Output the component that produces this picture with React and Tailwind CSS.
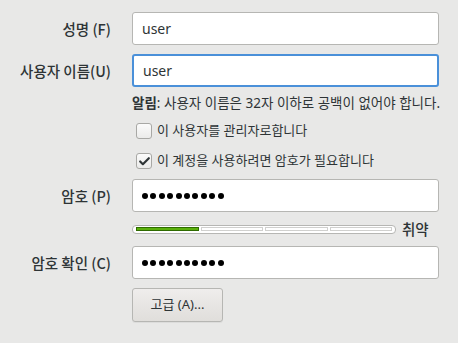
import { Check } from "lucide-react";

const font = { fontFamily: '"Noto Sans", "Noto Sans CJK KR", sans-serif' };

function Field({ label, children, className = "" }) {
  return (
    <div className={`flex items-center ${className}`}>
      <div className="w-[111px] whitespace-nowrap text-right font-['Noto_Sans_CJK_KR',sans-serif] text-[14.5px] font-medium text-[#2e3436]">
        {label}
      </div>
      <div className="ml-[21px] w-[307px]">{children}</div>
    </div>
  );
}

function TextBox({ value, focused }) {
  return (
    <div
      className={`flex h-[33px] items-center rounded-[3px] bg-white px-[9px] text-[14px] text-[#2e3436] ${
        focused ? "border-2 border-[#4a90d9] px-[8px]" : "border border-[#b6b6b3]"
      }`}
    >
      {value}
    </div>
  );
}

function PasswordBox() {
  return (
    <div className="flex h-[33px] items-center gap-[2.4px] rounded-[3px] border border-[#b6b6b3] bg-white px-[9px]">
      {Array.from({ length: 10 }).map((_, i) => (
        <span key={i} className="h-[6px] w-[6px] rounded-full bg-black" />
      ))}
    </div>
  );
}

function CheckRow({ checked, label, className = "" }) {
  return (
    <div className={`ml-[132px] flex h-[16px] items-center ${className}`}>
      <span className="ml-[4px] flex h-[16px] w-[16px] items-center justify-center rounded-[3px] border border-[#a8a8a5] bg-gradient-to-b from-[#fbfbfb] to-[#ebebea]">
        {checked && <Check size={13} strokeWidth={4} className="text-[#2e3436]" />}
      </span>
      <span className="ml-[5px] text-[13px] text-[#2e3436]">{label}</span>
    </div>
  );
}

export default function App() {
  return (
    <div className="h-[343px] w-[458px] bg-[#e8e8e7] pt-[12px]" style={font}>
      <Field label="성명 (F)">
        <TextBox value="user" />
      </Field>
      <Field label="사용자 이름(U)" className="mt-[9px]">
        <TextBox value="user" focused />
      </Field>
      <div className="ml-[132px] mt-[7px] h-[18px] whitespace-nowrap text-[13.5px] leading-[18px] text-[#2e3436]">
        <span className="font-bold">알림</span>: 사용자 이름은 32자 이하로 공백이 없어야 합니다.
      </div>
      <CheckRow label="이 사용자를 관리자로합니다" className="mt-[11px]" />
      <CheckRow checked label="이 계정을 사용하려면 암호가 필요합니다" className="mt-[14px]" />
      <Field label="암호 (P)" className="mt-[10px]">
        <PasswordBox />
      </Field>
      <div className="ml-[132px] mt-[13px] flex h-[8px] items-center">
        <div className="flex h-[9px] w-[264px] items-center gap-[2px] rounded-[4px] border border-[#b6b6b3] bg-white px-[3px]">
          <span className="h-[4px] flex-1 border border-[#2f6b00] bg-[#5bb10c]" />
          <span className="h-[4px] flex-1 border border-[#d0d0ce] bg-white" />
          <span className="h-[4px] flex-1 border border-[#d0d0ce] bg-white" />
          <span className="h-[4px] flex-1 border border-[#d0d0ce] bg-white" />
        </div>
        <span className="ml-[6px] font-['Noto_Sans_CJK_KR',sans-serif] text-[14.5px] font-medium text-[#2e3436]">
          취약
        </span>
      </div>
      <Field label="암호 확인 (C)" className="mt-[13px]">
        <PasswordBox />
      </Field>
      <div className="ml-[132px] mt-[9px]">
        <button
          type="button"
          className="flex h-[34px] w-[91px] items-center justify-center rounded-[3px] border border-[#b6b6b3] bg-gradient-to-b from-[#efedec] to-[#e0dedb] text-[13px] text-[#2e3436] shadow-[0_1px_0_rgba(0,0,0,0.05)]"
        >
          고급 (A)...
        </button>
      </div>
    </div>
  );
}
